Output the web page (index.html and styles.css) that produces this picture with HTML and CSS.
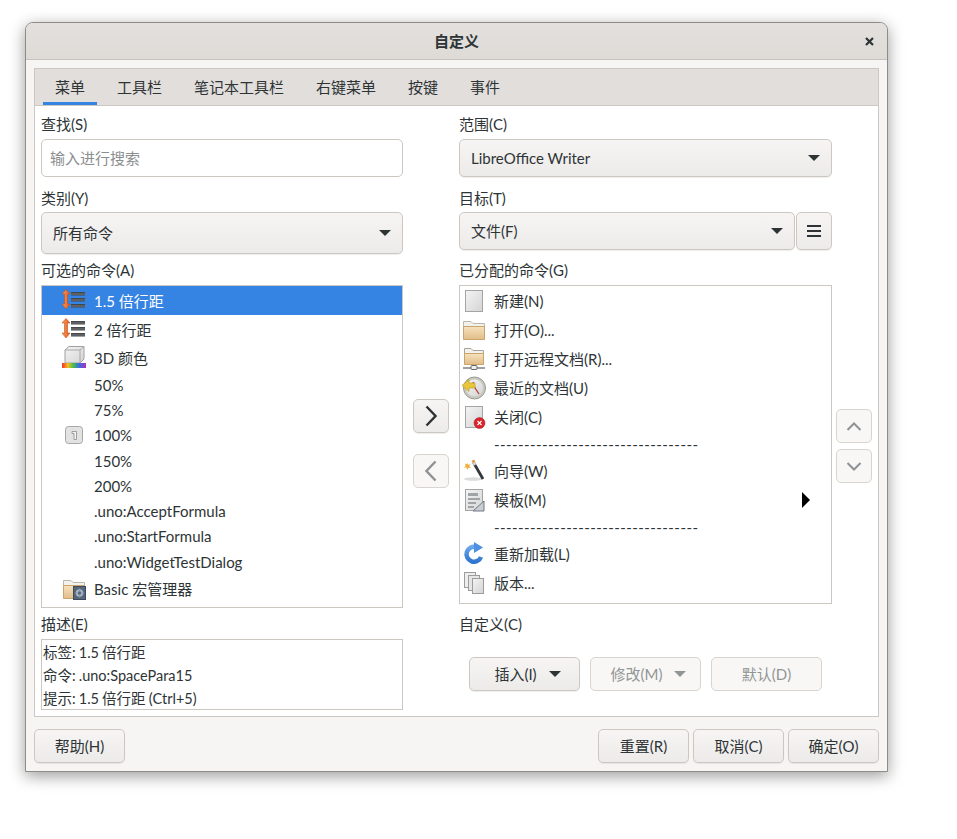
FILE: index.html
```html
<!DOCTYPE html>
<html lang="zh-CN">
<head>
    <meta charset="UTF-8">
    <title>自定义</title>
    <link rel="stylesheet" href="styles.css">
</head>
<body>
    <svg class="defs" width="0" height="0">
        <defs>
            <linearGradient id="paper" x1="0" y1="0" x2="1" y2="1"><stop offset="0" stop-color="#f4f4f4"/><stop offset="1" stop-color="#d4d4d4"/></linearGradient>
            <linearGradient id="tan" x1="0" y1="0" x2="0" y2="1"><stop offset="0" stop-color="#f6e2bf"/><stop offset="1" stop-color="#e2bd88"/></linearGradient>
            <linearGradient id="orange" x1="0" y1="0" x2="1" y2="0"><stop offset="0" stop-color="#f8a060"/><stop offset="1" stop-color="#e0571f"/></linearGradient>
            <linearGradient id="blue" x1="0" y1="0" x2="0" y2="1"><stop offset="0" stop-color="#6aa8ec"/><stop offset="1" stop-color="#2f74d0"/></linearGradient>
            <linearGradient id="rainbow" x1="0" y1="0" x2="1" y2="0"><stop offset="0" stop-color="#f03030"/><stop offset=".25" stop-color="#f5c020"/><stop offset=".45" stop-color="#50c040"/><stop offset=".7" stop-color="#3070e0"/><stop offset="1" stop-color="#b030c0"/></linearGradient>
            <symbol id="spacing" viewBox="0 0 24 24">
                <path d="M4 .5 L8 5 H5.500 V15 H8 L4 20 L0 15 H2.500 V5 H0 Z" fill="url(#orange)" stroke="#c8501c" stroke-width=".6"/>
                <path d="M9 3h14v3.500H9zM9 9h14v3.500H9zM9 15h14v3.500H9z" fill="#44474a"/>
                <path d="M9 5h14M9 11h14M9 17h14" stroke="#85888b" stroke-width=".8"/>
            </symbol>
            <symbol id="folder" viewBox="0 0 24 24">
                <path d="M1.500 3.500 H9 L11 5.500 H22.500 V10 H1.500 Z" fill="#f3f1ec" stroke="#bdb7aa"/>
                <path d="M1.500 8.500 H22.500 V21.500 H1.500 Z" fill="url(#tan)" stroke="#c9a56c"/>
            </symbol>
            <symbol id="page" viewBox="0 0 24 24">
                <rect x="3.500" y="1.500" width="17" height="21" fill="url(#paper)" stroke="#a4a4a4"/>
            </symbol>
        </defs>
    </svg>

    <div class="window">
        <div class="titlebar">
            <span class="title">自定义</span>
            <svg class="close" width="9" height="9" viewBox="0 0 9 9"><path d="M1 1l7 7M8 1l-7 7" stroke="#2e3436" stroke-width="2.200"/></svg>
        </div>

        <div class="main">
            <div class="notebook">
                <div class="tabs">
                    <div class="tab active">菜单</div>
                    <div class="tab">工具栏</div>
                    <div class="tab">笔记本工具栏</div>
                    <div class="tab">右键菜单</div>
                    <div class="tab">按键</div>
                    <div class="tab">事件</div>
                </div>

                <div class="page">
                    <label class="label left">查找(S)</label>
                    <label class="label right">范围(C)</label>

                    <div class="entry left">输入进行搜索</div>
                    <div class="combo right"><span>LibreOffice Writer</span><i class="caret"></i></div>

                    <label class="label left">类别(Y)</label>
                    <label class="label right">目标(T)</label>

                    <div class="combo tall left"><span>所有命令</span><i class="caret"></i></div>
                    <div class="target right">
                        <div class="combo"><span>文件(F)</span><i class="caret"></i></div>
                        <button class="btn menu-btn"><svg width="14" height="12" viewBox="0 0 14 12"><path d="M0 1h14M0 6h14M0 11h14" stroke="#2e3436" stroke-width="2"/></svg></button>
                    </div>

                    <label class="label left">可选的命令(A)</label>
                    <label class="label right">已分配的命令(G)</label>

                    <div class="list commands left">
                        <div class="row big selected"><svg class="icon" width="24" height="24"><use href="#spacing"/></svg>1.5 倍行距</div>
                        <div class="row big"><svg class="icon" width="24" height="24"><use href="#spacing"/></svg>2 倍行距</div>
                        <div class="row big short">
                            <svg class="icon" width="24" height="24" viewBox="0 0 24 24">
                                <path d="M3 4 L7 .5 H22 V13 L18 17 H3 Z" fill="url(#paper)" stroke="#a0a0a0"/>
                                <path d="M3 4 H18 V17 M18 4 L22 .5" fill="none" stroke="#a8a8a8"/>
                                <rect x="0" y="17" width="24" height="5" fill="url(#rainbow)"/>
                            </svg>3D 颜色</div>
                        <div class="row"><span class="icon"></span>50%</div>
                        <div class="row"><span class="icon"></span>75%</div>
                        <div class="row">
                            <svg class="icon" width="24" height="24" viewBox="0 0 24 24">
                                <rect x="3.500" y="3.500" width="17" height="17" rx="3" fill="#e2e2e2" stroke="#a8a8a8"/>
                                <path d="M10 8.500h4.500v8h-2.500v-6h-2z" fill="#f4f4f4" stroke="#8c8c8c" stroke-width=".8"/>
                            </svg>100%</div>
                        <div class="row"><span class="icon"></span>150%</div>
                        <div class="row"><span class="icon"></span>200%</div>
                        <div class="row"><span class="icon"></span>.uno:AcceptFormula</div>
                        <div class="row"><span class="icon"></span>.uno:StartFormula</div>
                        <div class="row"><span class="icon"></span>.uno:WidgetTestDialog</div>
                        <div class="row big">
                            <svg class="icon" width="24" height="24" viewBox="0 0 24 24">
                                <use href="#folder"/>
                                <rect x="11.500" y="9.500" width="12" height="13" fill="#56677c" stroke="#3d4b5c"/>
                                <circle cx="17.500" cy="16" r="2.700" fill="none" stroke="#a9b6c6" stroke-width="2"/>
                                <path d="M17.500 11.500v9M13 16h9" stroke="#8c9bad" stroke-width="1.200"/>
                                <circle cx="17.500" cy="16" r="1.500" fill="#56677c"/>
                            </svg>Basic 宏管理器</div>
                    </div>

                    <div class="movers">
                        <button class="btn arrow-btn"><svg width="12" height="22" viewBox="0 0 12 22"><path d="M1.500 1.500 L10.500 11 L1.500 20.500" fill="none" stroke="#2e3436" stroke-width="2.400"/></svg></button>
                        <button class="btn arrow-btn" disabled><svg width="12" height="22" viewBox="0 0 12 22"><path d="M10.500 1.500 L1.500 11 L10.500 20.500" fill="none" stroke="#8f9294" stroke-width="2.400"/></svg></button>
                    </div>

                    <div class="list assigned">
                        <div class="row big">
                            <svg class="icon" width="24" height="24"><use href="#page"/></svg>新建(N)</div>
                        <div class="row big">
                            <svg class="icon" width="24" height="24"><use href="#folder"/></svg>打开(O)...</div>
                        <div class="row big">
                            <svg class="icon" width="24" height="24" viewBox="0 0 24 24">
                                <path d="M2.500 1.500 H9 L11 3.500 H21.500 V8 H2.500 Z" fill="#f3f1ec" stroke="#a8a49a"/>
                                <path d="M2.500 6.500 H21.500 V17.500 H2.500 Z" fill="url(#tan)" stroke="#c9a56c"/>
                                <path d="M1 21h22" stroke="#777" stroke-width="1.400"/>
                                <rect x="9" y="18.500" width="6" height="4" rx="1" fill="#eee" stroke="#666"/>
                            </svg>打开远程文档(R)...</div>
                        <div class="row big">
                            <svg class="icon" width="24" height="24" viewBox="0 0 24 24">
                                <circle cx="12.500" cy="12" r="11" fill="#c8c8c0" stroke="#9a9a90"/>
                                <circle cx="12.500" cy="12" r="8.500" fill="url(#paper)"/>
                                <path d="M13 12 L17 18 M13 12 L11 6" stroke="#b03030" stroke-width="1.200"/>
                                <path d="M0 9.500 L7 3.500 V7 H13 V12 H7 V15.500 Z" fill="#e8c83a" stroke="#b89820" stroke-width=".6"/>
                            </svg>最近的文档(U)</div>
                        <div class="row big">
                            <svg class="icon" width="24" height="24" viewBox="0 0 24 24">
                                <use href="#page"/>
                                <circle cx="17.500" cy="18" r="5.500" fill="#d8242c" stroke="#b01c20" stroke-width=".5"/>
                                <path d="M15.500 16l4 4M19.500 16l-4 4" stroke="#fff" stroke-width="1.200"/>
                            </svg>关闭(C)</div>
                        <div class="row sep"><span class="icon"></span>----------------------------------</div>
                        <div class="row big">
                            <svg class="icon" width="24" height="24" viewBox="0 0 24 24">
                                <ellipse cx="11" cy="20" rx="9" ry="1.800" fill="#dcdcdc"/>
                                <path d="M11.500 3.500 L21 20" stroke="#33383c" stroke-width="2.800"/>
                                <path d="M11 2.500 L13 6" stroke="#d8d8d8" stroke-width="2.800"/>
                                <path d="M5 3.500l1.200 2.300 2.300-.6-1.200 2 1.700 1.800-2.500-.3-1.100 2.300-1-2.400-2.400-.2 1.700-1.700-.9-2.200 2.200.7z" fill="#f0b040"/>
                                <path d="M11 0l.7 1.300 1.300-.3-.5 1.200 1 .9-1.400.1-.6 1.300-.6-1.300-1.400-.2 1-.9-.5-1.200 1.300.4z" fill="#e89030"/>
                            </svg>向导(W)</div>
                        <div class="row big submenu">
                            <svg class="icon" width="24" height="24" viewBox="0 0 24 24">
                                <use href="#page"/>
                                <path d="M6 5h10v3H6zM6 10h12v2H6zM6 14h8v2H6zM6 18h6v2H6z" fill="#a0a4a8"/>
                                <path d="M22 13 V23 H11 Z" fill="#c8ced4" stroke="#707880"/>
                            </svg>模板(M)<i class="disclosure"></i></div>
                        <div class="row sep"><span class="icon"></span>----------------------------------</div>
                        <div class="row big">
                            <svg class="icon" width="24" height="24" viewBox="0 0 24 24">
                                <path d="M19 15 A7.500 7.500 0 1 1 14 5" fill="none" stroke="url(#blue)" stroke-width="4.500"/>
                                <path d="M12 0 L21 5.500 L12 11 Z" fill="#4c90e2"/>
                            </svg>重新加载(L)</div>
                        <div class="row big">
                            <svg class="icon" width="24" height="24" viewBox="0 0 24 24">
                                <rect x="2.500" y="1.500" width="11" height="15" fill="#eee" stroke="#9c9c9c"/>
                                <rect x="6.500" y="4.500" width="11" height="15" fill="#e6e6e6" stroke="#9c9c9c"/>
                                <rect x="10.500" y="7.500" width="11" height="15" fill="url(#paper)" stroke="#9c9c9c"/>
                            </svg>版本...</div>
                    </div>

                    <div class="updown">
                        <button class="btn arrow-btn" disabled><svg width="16" height="9" viewBox="0 0 16 9"><path d="M1.500 8 L8 1.500 L14.500 8" fill="none" stroke="#8f9294" stroke-width="2"/></svg></button>
                        <button class="btn arrow-btn" disabled><svg width="16" height="9" viewBox="0 0 16 9"><path d="M1.500 1 L8 7.500 L14.500 1" fill="none" stroke="#8f9294" stroke-width="2"/></svg></button>
                    </div>

                    <label class="label left">描述(E)</label>
                    <label class="label right">自定义(C)</label>

                    <div class="desc left">
                        <div>标签: 1.5 倍行距</div>
                        <div>命令: .uno:SpacePara15</div>
                        <div>提示: 1.5 倍行距 (Ctrl+5)</div>
                    </div>
                    <div class="custom right">
                        <button class="btn wide has-caret">插入(I)<i class="caret small"></i></button>
                        <button class="btn wide has-caret" disabled>修改(M)<i class="caret small"></i></button>
                        <button class="btn wide" disabled>默认(D)</button>
                    </div>
                </div>
            </div>
        </div>

        <div class="footer">
            <button class="btn wide">帮助(H)</button>
            <div class="footer-right">
                <button class="btn wide">重置(R)</button>
                <button class="btn wide">取消(C)</button>
                <button class="btn wide">确定(O)</button>
            </div>
        </div>
    </div>
</body>
</html>
```

FILE: styles.css
```css
* {
    box-sizing: border-box;
}
html, body {
    min-height: 100%;
}
body {
    margin: 0;
    padding: 22px 0 0 25px;
    height: 839px;
    background: white;
    color: #2e3436;
    font-family: "Lato", "Noto Sans CJK SC", sans-serif;
    font-size: 15px;
    line-height: 20px;
}
.defs {
    position: absolute;
}
.window {
    width: 863px;
    height: 750px;
    display: flex;
    flex-direction: column;
    background: #f6f5f4;
    border: 1px solid #8f8c88;
    border-radius: 8px 8px 0 0;
    box-shadow: 0 4px 16px rgba(0, 0, 0, 0.4);
}
.titlebar {
    height: 37px;
    flex: none;
    display: flex;
    align-items: center;
    justify-content: center;
    position: relative;
    background: linear-gradient(#e3e0dd, #dedbd7);
    border-bottom: 1px solid #c6c2bd;
    border-radius: 7px 7px 0 0;
}
.title {
    font-weight: bold;
}
.close {
    position: absolute;
    right: 13px;
    top: 14px;
}
.main {
    flex: none;
    padding: 8px 8px 0;
}
.notebook {
    height: 649px;
    border: 1px solid #cdc7c2;
    background: white;
    display: flex;
    flex-direction: column;
}
.tabs {
    height: 37px;
    flex: none;
    display: flex;
    gap: 8px;
    padding-left: 8px;
    background: #e1dedb;
    border-bottom: 1px solid #cdc7c2;
}
.tab {
    padding: 8px 12px 0;
    height: 36px;
}
.tab.active {
    border-bottom: 3px solid #3584e4;
}
.page {
    display: grid;
    grid-template-columns: 362px 56px 373px 1fr;
    grid-template-rows: 25px 49px 24px 48px 25px 329px 25px 71px;
    padding: 8px 0 0 6px;
}
.left {
    grid-column: 1;
}
.right {
    grid-column: 3;
}
.label {
    display: block;
}
.entry {
    height: 38px;
    border: 1px solid #cdc7c2;
    border-radius: 5px;
    padding: 8px 8px;
    color: #8b8e8f;
}
.combo, .btn {
    border: 1px solid #cdc7c2;
    border-radius: 5px;
    background: linear-gradient(#f6f5f4, #edebe9);
    box-shadow: 0 1px 1px rgba(0, 0, 0, 0.07);
    color: #2e3436;
}
.combo {
    height: 38px;
    display: flex;
    align-items: center;
    justify-content: space-between;
    padding: 0 11px;
}
.combo.tall {
    height: 42px;
}
.caret {
    width: 0;
    height: 0;
    border-left: 6.500px solid transparent;
    border-right: 6.500px solid transparent;
    border-top: 6.500px solid #2e3436;
}
.caret.small {
    border-left-width: 6px;
    border-right-width: 6px;
    border-top-width: 6px;
}
.target {
    display: flex;
    gap: 1px;
    height: 38px;
}
.target .combo {
    flex: 1;
}
.btn {
    font: inherit;
    padding: 0;
    display: flex;
    align-items: center;
    justify-content: center;
}
.btn:disabled {
    background: #f8f7f6;
    border-color: #d8d4d0;
    box-shadow: none;
    color: #929595;
}
.btn:disabled .caret {
    border-top-color: #929595;
}
.menu-btn {
    width: 36px;
    flex: none;
}
.list {
    border: 1px solid #cdc7c2;
    background: white;
}
.commands {
    height: 323px;
    padding-left: 20px;
}
.assigned {
    grid-column: 3;
    height: 319px;
    padding-left: 2px;
}
.row {
    display: flex;
    align-items: center;
    gap: 8px;
    height: 25.300px;
}
.row.big {
    height: 29px;
}
.row.short {
    height: 28px;
}
.row.sep {
    letter-spacing: 0.44px;
}
.icon {
    flex: none;
    width: 24px;
    height: 24px;
}
.row.selected {
    background: #3584e4;
    color: white;
    margin-left: -20px;
    padding-left: 20px;
}
.submenu {
    padding-right: 21px;
}
.disclosure {
    margin-left: auto;
    width: 0;
    height: 0;
    border-top: 8.500px solid transparent;
    border-bottom: 8.500px solid transparent;
    border-left: 8px solid black;
}
.movers, .updown {
    display: flex;
    flex-direction: column;
}
.movers {
    grid-column: 2;
    grid-row: 6;
    gap: 21px;
    padding: 114px 0 0 10px;
}
.updown {
    gap: 6px;
    padding: 124px 0 0 4px;
}
.arrow-btn {
    width: 36px;
    height: 34px;
}
.desc {
    border: 1px solid #cdc7c2;
    padding: 1px 1px;
    font-size: 14.500px;
    word-spacing: -0.6px;
    line-height: 23px;
    height: 71px;
}
.custom {
    display: flex;
    gap: 10px;
    padding: 18px 0 0 10px;
}
.wide {
    width: 91px;
    height: 34px;
}
.custom .wide {
    width: 111px;
}
.custom .has-caret {
    gap: 12px;
    padding-left: 6px;
}
.footer {
    flex: 1;
    display: flex;
    justify-content: space-between;
    padding: 12px 8px 0;
}
.footer-right {
    display: flex;
    gap: 4px;
}
```
